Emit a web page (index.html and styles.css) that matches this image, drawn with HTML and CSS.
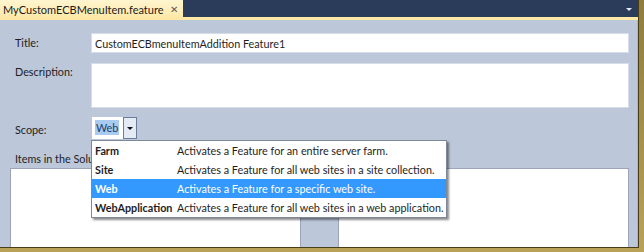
FILE: index.html
```html
<!DOCTYPE html>
<html lang="en">
<head>
    <meta charset="UTF-8">
    <title>MyCustomECBMenuItem.feature</title>
    <link rel="stylesheet" href="styles.css">
</head>
<body>
    <div class="frame">
        <div class="tabbar">
            <div class="tab">
                <span class="tab-title">MyCustomECBMenuItem.feature</span>
                <span class="tab-close">&#x2715;</span>
            </div>
            <span class="tab-menu"></span>
        </div>
        <div class="panel">
            <div class="row row-title">
                <label class="label">Title:</label>
                <div class="textbox">CustomECBmenuItemAddition Feature1</div>
            </div>
            <div class="row row-desc">
                <label class="label">Description:</label>
                <div class="textbox textarea"></div>
            </div>
            <div class="row row-scope">
                <label class="label">Scope:</label>
                <div class="combo">
                    <div class="combo-value"><span class="selected">Web</span></div>
                    <div class="combo-button"><span class="arrow"></span></div>
                    <ul class="dropdown">
                        <li><b>Farm</b><span>Activates a Feature for an entire server farm.</span></li>
                        <li><b>Site</b><span>Activates a Feature for all web sites in a site collection.</span></li>
                        <li class="active"><b>Web</b><span>Activates a Feature for a specific web site.</span></li>
                        <li><b>WebApplication</b><span>Activates a Feature for all web sites in a web application.</span></li>
                    </ul>
                </div>
            </div>
            <div class="items-label">Items in the Solution:</div>
            <div class="items">
                <div class="listbox"></div>
                <div class="listbox"></div>
            </div>
        </div>
    </div>
</body>
</html>
```

FILE: styles.css
```css
* { margin: 0; padding: 0; box-sizing: border-box; }
body {
    width: 644px;
    height: 252px;
    overflow: hidden;
    background: linear-gradient(#8f7c3c, #b9a257);
    font-family: Lato, sans-serif;
    font-size: 10.8px;
    color: #1e1e1e;
    white-space: nowrap;
}
.frame {
    width: 639px;
    height: 248px;
    display: flex;
    flex-direction: column;
    border-right: 1px solid #4a3d17;
    border-bottom: 1px solid #4a3d17;
    overflow: hidden;
}
.tabbar {
    height: 20px;
    flex: none;
    display: flex;
    align-items: flex-start;
    background-color: #2b3b5a;
    border-bottom: 3px solid #ffe8a6;
}
.tab {
    width: 183px;
    height: 17px;
    display: flex;
    align-items: center;
    justify-content: space-between;
    padding: 1px 5px 0 3px;
    background: linear-gradient(#fff5cf, #ffe9ab);
}
.tab-title { font-size: 11px; color: #1b1b1b; }
.tab-close { font-size: 10px; color: #5a5a5a; }
.tab-menu {
    margin: 8px 6px 0 auto;
    width: 0;
    height: 0;
    border-left: 3px solid transparent;
    border-right: 3px solid transparent;
    border-top: 3px solid #e6e9f0;
}
.panel {
    flex: 1;
    background-color: #bcc7d9;
    padding: 13px 8px 0 10px;
    border-right: 1px solid #a9b5c8;
}
.row { display: flex; }
.label { width: 81px; padding-left: 5px; flex: none; }
.row-title .label { padding-top: 3px; }
.textbox {
    flex: 1;
    height: 20px;
    background: #fff;
    border: 1px solid #d7dde7;
    padding: 3px 3px;
}
.row-desc { margin-top: 10px; }
.row-desc .label { padding-top: 2px; }
.textarea { height: 45px; }
.row-scope { margin-top: 9px; }
.row-scope .label { padding-top: 6px; }
.combo {
    position: relative;
    display: flex;
    height: 22px;
    margin-left: 1px;
}
.combo-value {
    width: 31px;
    background: #fff;
    padding: 4px 0 0 3px;
}
.selected { background: #a8cbef; color: #1a3c6e; padding: 1px 1px; }
.combo-button {
    width: 14px;
    border: 1px solid #6c7d99;
    background: #e5ebf4;
    display: flex;
    align-items: center;
    justify-content: center;
}
.arrow {
    width: 0;
    height: 0;
    border-left: 3px solid transparent;
    border-right: 3px solid transparent;
    border-top: 3px solid #111;
}
.dropdown {
    position: absolute;
    top: 23px;
    left: -1px;
    width: 356px;
    list-style: none;
    background: #fff;
    border: 1px solid #7f8896;
    box-shadow: 2px 2px 2px rgba(0, 0, 0, 0.45);
    z-index: 2;
}
.dropdown li {
    display: flex;
    height: 19px;
    align-items: center;
    padding-left: 3px;
}
.dropdown b { width: 82px; flex: none; }
.dropdown .active { background: #3399ff; color: #fff; }
.items-label { margin-top: 13px; padding-left: 5px; }
.items {
    margin-top: 3px;
    display: grid;
    grid-template-columns: 291px 291px;
    column-gap: 37px;
}
.listbox {
    height: 90px;
    background: #fff;
    border: 1px solid #9aa5b8;
}
```
